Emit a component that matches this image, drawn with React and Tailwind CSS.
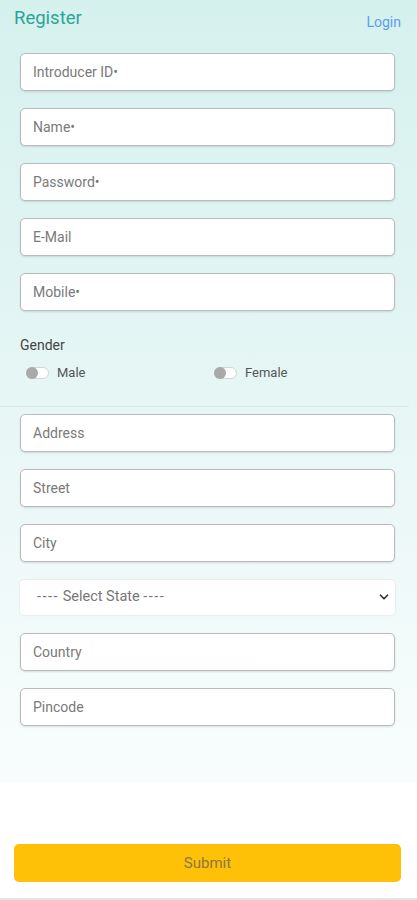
import { ChevronDown } from "lucide-react";

const font = { fontFamily: "Roboto, 'Liberation Sans', sans-serif" };

function Field({ placeholder, className = "" }) {
  return (
    <input
      type="text"
      placeholder={placeholder}
      className={`h-[38px] w-full rounded-[5px] border border-[#b9bcbc] bg-white px-3 text-[14px] text-[#444] shadow-[0_1px_2px_rgba(0,0,0,0.12)] outline-none placeholder:text-[#7a7a7a] ${className}`}
    />
  );
}

function Toggle({ label }) {
  return (
    <label className="flex items-center gap-[8px]">
      <span className="relative flex h-[12px] w-[23px] items-center rounded-full border border-[#d5d5d5] bg-white">
        <span className="absolute -left-[1px] h-[12px] w-[12px] rounded-full bg-[#a9a9a9]" />
      </span>
      <span className="text-[13px] text-[#555]">{label}</span>
    </label>
  );
}

export default function App() {
  return (
    <div className="flex min-h-[900px] w-full flex-col bg-white" style={font}>
      {/* Form area */}
      <div className="flex h-[783px] flex-col bg-gradient-to-b from-[#d5f1ee] via-[#e6f6f5] to-[#f9fdfd]">
        {/* Header */}
        <div className="flex items-start justify-between pl-[14px] pr-[16px] pt-[5px]">
          <h1 className="text-[18.5px] font-normal text-[#2ba597]">Register</h1>
          <a className="mt-[7px] text-[14px] text-[#5c9ded]">Login</a>
        </div>

        <div className="mt-[20px] flex flex-col gap-[17px] pl-[20px] pr-[22px]">
          <Field placeholder="Introducer ID•" />
          <Field placeholder="Name•" />
          <Field placeholder="Password•" />
          <Field placeholder="E-Mail" />
          <Field placeholder="Mobile•" />
        </div>

        {/* Gender */}
        <div className="mt-[26px] pl-[20px]">
          <p className="text-[14px] leading-[16px] text-[#454545]">Gender</p>
          <div className="mt-[10px] flex pl-[6px]">
            <div className="w-[188px]">
              <Toggle label="Male" />
            </div>
            <Toggle label="Female" />
          </div>
        </div>

        <div className="mt-[23px] mr-[8px] h-px bg-[#dde9e9]" />

        <div className="mt-[7px] flex flex-col gap-[17px] pl-[20px] pr-[22px]">
          <Field placeholder="Address" />
          <Field placeholder="Street" />
          <Field placeholder="City" />
          <div className="my-[1px] flex h-[35px] w-full items-center justify-between rounded-[4px] bg-white pr-[4px] shadow-[0_0_2px_rgba(0,0,0,0.15)]">
            <span className="ml-[17px] text-[14.5px] text-[#777]">
              <span className="tracking-[1.5px]">----</span> Select State <span className="tracking-[1.5px]">----</span>
            </span>
            <ChevronDown size={14} strokeWidth={3} className="text-[#333]" />
          </div>
          <Field placeholder="Country" />
          <Field placeholder="Pincode" />
        </div>
      </div>

      {/* Submit */}
      <div className="flex-1 px-[14px] pt-[61px]">
        <button className="h-[38px] w-[387px] rounded-[5px] bg-[#ffc107] text-[15px] text-[#8a7840]">
          Submit
        </button>
      </div>
      <div className="h-[2px] bg-[#e4e4e4]" />
    </div>
  );
}
